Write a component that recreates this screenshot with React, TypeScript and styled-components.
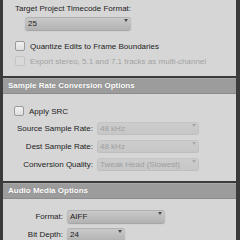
import React from "react";
import styled, { createGlobalStyle } from "styled-components";

const Global = createGlobalStyle`
  html, body { margin: 0; padding: 0; background: #3b3b3b; }
  body { width: 240px; height: 240px; overflow: hidden; font-family: "Liberation Sans", Arial, sans-serif; }
`;

const Frame = styled.div`
  width: 240px;
  height: 240px;
  overflow: hidden;
  background: #3b3b3b;
  padding: 0 4px 0 3px;
  box-sizing: border-box;
  display: flex;
  flex-direction: column;
`;

const Panel = styled.div<{ $pt: number; $pb: number; $px?: number }>`
  background: #d6d6d6;
  padding: ${(p) => p.$pt}px 0 ${(p) => p.$pb}px ${(p) => p.$px ?? 12}px;
  display: flex;
  flex-direction: column;
  flex-shrink: 0;
`;

const Header = styled.div<{ $mt: number }>`
  margin-top: ${(p) => p.$mt}px;
  height: 16px;
  box-sizing: border-box;
  background: #9c9c9c;
  border-top: 1px solid #a9a9a9;
  border-bottom: 1px solid #8c8c8c;
  color: #ffffff;
  font-weight: bold;
  font-size: 8px;
  line-height: 14px;
  padding-left: 5px;
  text-shadow: 0 0 1px rgba(0, 0, 0, 0.25);
  flex-shrink: 0;
`;

const Label = styled.div`
  font-size: 8px;
  line-height: 10px;
  color: #1c1c1c;
`;

const Select = styled.div<{ $w: number; $disabled?: boolean; $mt?: number; $ml?: number }>`
  position: relative;
  width: ${(p) => p.$w}px;
  height: 13px;
  margin-top: ${(p) => p.$mt ?? 0}px;
  margin-left: ${(p) => p.$ml ?? 0}px;
  box-sizing: border-box;
  border-radius: 3px;
  font-size: 8px;
  line-height: 13px;
  padding-left: 3px;
  color: ${(p) => (p.$disabled ? "#9e9e9e" : "#1c1c1c")};
  background: ${(p) =>
    p.$disabled
      ? "linear-gradient(#cdcdcd, #c6c6c6)"
      : "linear-gradient(#cbcbcb, #b2b2b2)"};
  box-shadow: ${(p) =>
    p.$disabled
      ? "inset 0 0 0 1px rgba(0,0,0,0.04)"
      : "inset 0 1px 0 rgba(0,0,0,0.12), 0 1px 1px rgba(0,0,0,0.25)"};
  flex-shrink: 0;
`;

const Arrow = styled.span<{ $disabled?: boolean }>`
  position: absolute;
  right: 3px;
  top: 2px;
  width: 0;
  height: 0;
  border-left: 2.5px solid transparent;
  border-right: 2.5px solid transparent;
  border-top: 3px solid ${(p) => (p.$disabled ? "#a8a8a8" : "#4a4a4a")};
`;

const CheckRow = styled.div<{ $mt: number; $ml?: number; $disabled?: boolean }>`
  display: flex;
  align-items: center;
  gap: 5px;
  margin-top: ${(p) => p.$mt}px;
  margin-left: ${(p) => p.$ml ?? 0}px;
  height: 10px;
  font-size: 8px;
  color: ${(p) => (p.$disabled ? "#a2a2a2" : "#1c1c1c")};
`;

const Box = styled.span<{ $disabled?: boolean }>`
  width: 10px;
  height: 10px;
  box-sizing: border-box;
  border-radius: 2px;
  border: 1px solid ${(p) => (p.$disabled ? "#c4c4c4" : "#9a9a9a")};
  background: ${(p) =>
    p.$disabled ? "#d9d9d9" : "linear-gradient(#f2f2f2, #dedede)"};
  flex-shrink: 0;
`;

const FormRow = styled.div<{ $label: number; $mt: number }>`
  display: grid;
  grid-template-columns: ${(p) => p.$label}px auto;
  column-gap: 4px;
  align-items: center;
  margin-top: ${(p) => p.$mt}px;
  height: 13px;
`;

const RowLabel = styled.div`
  text-align: right;
  font-size: 8px;
  line-height: 13px;
  color: #1c1c1c;
  white-space: nowrap;
`;

function Dropdown(props: { w: number; value: string; disabled?: boolean; mt?: number; ml?: number }) {
  return (
    <Select $w={props.w} $disabled={props.disabled} $mt={props.mt} $ml={props.ml}>
      {props.value}
      <Arrow $disabled={props.disabled} />
    </Select>
  );
}

export default function App() {
  return (
    <>
      <Global />
      <Frame>
        <Panel $pt={4} $pb={10}>
          <Label>Target Project Timecode Format:</Label>
          <Dropdown w={106} value="25" mt={3} ml={10} />
          <CheckRow $mt={11}>
            <Box />
            Quantize Edits to Frame Boundaries
          </CheckRow>
          <CheckRow $mt={5} $disabled>
            <Box $disabled />
            Export stereo, 5.1 and 7.1 tracks as multi-channel
          </CheckRow>
        </Panel>
        <Header $mt={2}>Sample Rate Conversion Options</Header>
        <Panel $pt={12} $pb={10} $px={0}>
          <CheckRow $mt={0} $ml={11}>
            <Box />
            Apply SRC
          </CheckRow>
          <FormRow $label={90} $mt={6}>
            <RowLabel>Source Sample Rate:</RowLabel>
            <Dropdown w={102} value="48 kHz" disabled />
          </FormRow>
          <FormRow $label={90} $mt={5}>
            <RowLabel>Dest Sample Rate:</RowLabel>
            <Dropdown w={102} value="48 kHz" disabled />
          </FormRow>
          <FormRow $label={90} $mt={5}>
            <RowLabel>Conversion Quality:</RowLabel>
            <Dropdown w={102} value="Tweak Head (Slowest)" disabled />
          </FormRow>
        </Panel>
        <Header $mt={2}>Audio Media Options</Header>
        <Panel $pt={11} $pb={10} $px={0}>
          <FormRow $label={60} $mt={0}>
            <RowLabel>Format:</RowLabel>
            <Dropdown w={98} value="AIFF" />
          </FormRow>
          <FormRow $label={60} $mt={5}>
            <RowLabel>Bit Depth:</RowLabel>
            <Dropdown w={58} value="24" />
          </FormRow>
        </Panel>
      </Frame>
    </>
  );
}
